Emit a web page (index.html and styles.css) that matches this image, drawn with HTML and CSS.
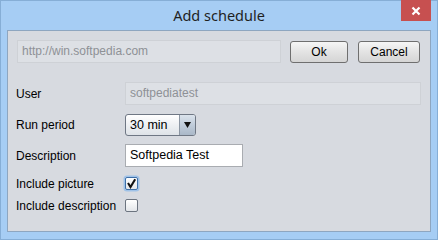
FILE: index.html
```html
<!DOCTYPE html>
<html lang="en">
<head>
    <meta charset="UTF-8">
    <title>Add schedule</title>
    <link rel="stylesheet" href="styles.css">
</head>
<body>
    <div class="window">
        <div class="titlebar">
            <span></span>
            <div class="title">Add schedule</div>
            <button class="close" aria-label="Close">
                <svg width="10" height="10" viewBox="0 0 10 10">
                    <path d="M1.5 1.5 L8.5 8.5 M8.5 1.5 L1.5 8.5" stroke="#fff" stroke-width="2.2"/>
                </svg>
            </button>
        </div>

        <div class="content">
            <div class="url-row">
                <div class="field disabled url">http://win.softpedia.com</div>
                <button class="btn ok">Ok</button>
                <button class="btn cancel">Cancel</button>
            </div>

            <div class="row row-user">
                <label>User</label>
                <div class="field disabled user">softpediatest</div>
            </div>
            <div class="row row-period">
                <label>Run period</label>
                <div class="combo">
                    <span class="combo-value">30 min</span>
                    <span class="combo-arrow">
                        <svg width="7" height="6" viewBox="0 0 7 6"><path d="M0 0 H7 L3.5 6 Z" fill="#111"/></svg>
                    </span>
                </div>
            </div>
            <div class="row row-desc">
                <label>Description</label>
                <div class="field text desc">Softpedia Test</div>
            </div>
            <div class="row row-pic">
                <label>Include picture</label>
                <span class="check checked">
                    <svg width="11" height="11" viewBox="0 0 11 11"><path d="M2 5 L4.5 9 L9.2 1.2" fill="none" stroke="#111" stroke-width="2.1"/></svg>
                </span>
            </div>
            <div class="row row-incdesc">
                <label>Include description</label>
                <span class="check"></span>
            </div>
        </div>
    </div>
</body>
</html>
```

FILE: styles.css
```css
body {
    margin: 0;
    font-family: 'Liberation Sans', Arial, sans-serif;
    font-size: 12px;
    color: #000;
}
.window {
    width: 438px;
    height: 240px;
    box-sizing: border-box;
    background-color: #a6cdf4;
    border: 1px solid #86aed6;
    display: flex;
    flex-direction: column;
}
.titlebar {
    height: 29px;
    display: grid;
    grid-template-columns: 1fr auto 1fr;
    align-items: start;
    padding-right: 6px;
}
.title {
    font-family: 'Noto Sans', sans-serif;
    font-size: 14.5px;
    color: #1f1f1f;
    line-height: 29px;
    padding-left: 6px;
}
.close {
    justify-self: end;
    width: 30px;
    height: 21px;
    background-color: #c75050;
    border: none;
    padding: 0;
    display: flex;
    align-items: center;
    justify-content: center;
    margin-top: -1px;
}
.content {
    flex: 1;
    margin: 0 6px 7px 6px;
    background-color: #d7dae0;
    border: 1px solid #8ea6c0;
    padding: 9px 8px 0 8px;
}
.url-row {
    display: flex;
    height: 23px;
    margin-left: 1px;
}
.field {
    box-sizing: border-box;
    height: 23px;
    line-height: 21px;
    padding: 0 4px;
    white-space: nowrap;
}
.field.disabled {
    background-color: #dde0e5;
    border: 1px solid #ced1d6;
    color: #8e9196;
}
.url {
    width: 264px;
}
.user {
    width: 296px;
    color: #a2a5aa;
}
.btn {
    box-sizing: border-box;
    height: 22px;
    margin-top: 1px;
    border: 1px solid #6f6f6f;
    border-radius: 3px;
    background: linear-gradient(#f6f6f6, #e3e3e3 50%, #d5d5d5);
    font-family: inherit;
    font-size: 12px;
    color: #000;
    padding: 0;
}
.ok {
    width: 58px;
    margin-left: 9px;
}
.cancel {
    width: 62px;
    margin-left: 10px;
}
.row {
    display: flex;
    align-items: center;
}
.row label {
    width: 109px;
}
.row-user { margin-top: 19px; height: 23px; }
.row-period { margin-top: 9px; height: 22px; }
.row-desc { margin-top: 8px; height: 23px; }
.row-pic { margin-top: 5px; height: 23px; }
.row-incdesc { height: 21px; }

.combo {
    box-sizing: border-box;
    width: 71px;
    height: 22px;
    border: 1px solid #6f7784;
    border-radius: 3px;
    display: flex;
    overflow: hidden;
    background: linear-gradient(#ffffff, #eef0f3 50%, #dfe3e8);
}
.combo-value {
    flex: 1;
    line-height: 20px;
    padding-left: 4px;
    font-size: 12.5px;
}
.combo-arrow {
    width: 15px;
    border-left: 1px solid #8c96a3;
    background: linear-gradient(#dbe3ec, #c0ccda 50%, #aab8c8);
    display: flex;
    align-items: center;
    justify-content: center;
}
.text {
    width: 118px;
    background-color: #fff;
    border: 1px solid #a9acb1;
    font-size: 12.5px;
}
.check {
    box-sizing: border-box;
    width: 13px;
    height: 13px;
    border: 1px solid #6c7480;
    border-radius: 2px;
    background: linear-gradient(#ffffff, #e3e6ea);
    display: flex;
    align-items: center;
    justify-content: center;
}
.check.checked {
    border-color: #3d6fa8;
    box-shadow: 0 0 0 1.5px #9fc2e8;
}
```
